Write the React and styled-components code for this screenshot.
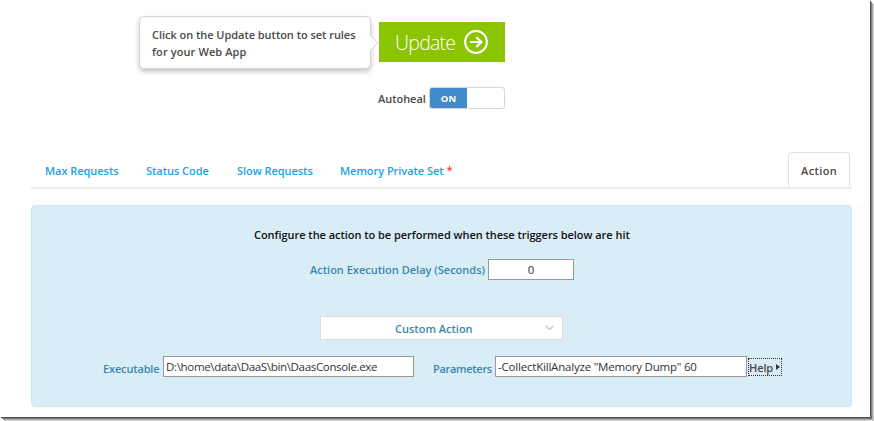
import React from "react";
import styled, { createGlobalStyle } from "styled-components";

const GlobalStyle = createGlobalStyle`
  * { box-sizing: border-box; }
  body { margin: 0; background: #fff; font-family: "Open Sans", "Noto Sans", sans-serif; font-size: 11px; overflow: hidden; }
`;

const Frame = styled.div`
  width: 874px;
  height: 421px;
  padding: 0 4px 4px 0;
  overflow: hidden;
`;

const Sheet = styled.main`
  height: 417px;
  padding: 16px 18px 0 31px;
  background: #fff;
  box-shadow: 1px 1px 0 #505050, 2px 2px 0 #7b7b7b, 3px 3px 0 #acacac, 4px 4px 0 #d2d2d2;
`;

const Text = styled.span`
  display: block;
  white-space: nowrap;
  font-weight: 600;
  line-height: 17px;
  color: ${(p) => p.$color || "#4a4a4a"};
  letter-spacing: ${(p) => p.$track ?? -0.04}px;
`;

const UpdateRow = styled.header`
  display: flex;
  height: 53px;
  padding-left: 108px;
`;

const Callout = styled.div`
  position: relative;
  width: 232px;
  height: 53px;
  padding: 9px 12px;
  border: 1px solid #d4d4d4;
  border-radius: 5px;
  background: #fff;
  box-shadow: 0 3px 5px rgba(0, 0, 0, 0.22);
`;

const Pointer = styled.svg`
  position: absolute;
  top: 17px;
  right: -9px;
`;

const UpdateButton = styled.button`
  display: flex;
  align-items: center;
  width: 126px;
  height: 40px;
  margin: 6px 0 0 8px;
  padding: 0 17px 0 16px;
  border: 0;
  background: #8bc400;
  color: #fff;
  font: 300 19.5px "Open Sans", sans-serif;
  letter-spacing: -0.75px;
  svg { flex: none; margin: -1px 0 0 auto; }
`;

const ToggleRow = styled.div`
  display: flex;
  align-items: center;
  gap: 3px;
  height: 22px;
  margin: 18px 0 0 347px;
`;

const ToggleLabel = styled.div`
  width: 48px;
`;

const Toggle = styled.div`
  width: 76px;
  height: 22px;
  border: 1px solid #d6d6d6;
  border-radius: 3px;
  overflow: hidden;
`;

const ToggleOn = styled.div`
  display: grid;
  place-items: center;
  width: 37px;
  height: 20px;
  background: #428bca;
  color: #fff;
  font-size: 9.5px;
  font-weight: 700;
`;

const Tabs = styled.nav`
  display: flex;
  height: 37px;
  margin-top: 43px;
  border-bottom: 2px solid #ededed;
`;

const Tab = styled.a`
  display: flex;
  width: ${(p) => p.$width}px;
  height: 35px;
  padding: 10px 0 0 14px;
`;

const ActiveTab = styled.a`
  height: 35px;
  width: 62px;
  margin: 0 2px 0 auto;
  padding: 9px 0 0 12px;
  border: 1px solid #e0e0e0;
  border-bottom: 0;
  border-radius: 4px 4px 0 0;
  background: #fff;
`;

const Star = styled.span`
  margin-left: 3px;
  color: #f33;
  font-weight: 600;
`;

const Panel = styled.section`
  height: 202px;
  margin-top: 16px;
  padding-top: 20px;
  border: 1px solid #c4eaf1;
  border-radius: 4px;
  background: #d9edf7;
`;

const Heading = styled.div`
  padding-left: 222px;
`;

const DelayRow = styled.div`
  display: flex;
  align-items: center;
  height: 21px;
  margin: 16px 0 0 278px;
`;

const DelayLabel = styled.div`
  width: 178px;
`;

const Field = styled.div`
  flex: none;
  width: ${(p) => p.$width}px;
  height: 21px;
  padding: 0 2px;
  border: 1px solid #999;
  background: #fff;
  color: #333;
  font-size: 11.5px;
  line-height: 20px;
  white-space: nowrap;
  text-align: ${(p) => (p.$center ? "center" : "left")};
  letter-spacing: ${(p) => p.$track || 0}px;
`;

const Select = styled.div`
  display: flex;
  align-items: center;
  justify-content: space-between;
  width: 243px;
  height: 24px;
  margin: 36px 0 0 288px;
  padding: 0 8px 0 74px;
  border: 1px solid #ddd;
  background: #fff;
`;

const ActionRow = styled.div`
  display: flex;
  margin: 16px 0 0 71px;
`;

const FieldLabel = styled.div`
  flex: none;
  width: ${(p) => p.$width}px;
  margin-left: ${(p) => p.$gap || 0}px;
  padding-top: 4px;
`;

const Help = styled.button`
  display: flex;
  align-items: center;
  justify-content: space-between;
  width: 34px;
  height: 18px;
  margin: 2px 0 0 1px;
  padding: 0 1px 0 0;
  border: 1px dotted #333;
  background: transparent;
  font: 11px "Open Sans", sans-serif;
`;

const blue = "#3a87ad";
const link = "#1ba1e8";

export default function App() {
  return (
    <Frame>
      <GlobalStyle />
      <Sheet>
        <UpdateRow>
          <Callout>
            <Text>Click on the Update button to set rules</Text>
            <Text $track={0.1}>for your Web App</Text>
            <Pointer width="9" height="18" viewBox="0 0 9 18">
              <path d="M0 1 8 9 0 17" fill="#fff" stroke="#d0d0d0" />
            </Pointer>
          </Callout>
          <UpdateButton>
            Update
            <svg width="24" height="24" viewBox="0 0 24 24" fill="none" stroke="#fff">
              <circle cx="12" cy="12" r="10.9" strokeWidth="2" />
              <path d="M6.2 12H17M12.3 7l5 5-5 5" strokeWidth="2.2" />
            </svg>
          </UpdateButton>
        </UpdateRow>
        <ToggleRow>
          <ToggleLabel><Text>Autoheal</Text></ToggleLabel>
          <Toggle><ToggleOn>ON</ToggleOn></Toggle>
        </ToggleRow>
        <Tabs>
          <Tab $width={101}><Text $color={link}>Max Requests</Text></Tab>
          <Tab $width={91}><Text $color={link}>Status Code</Text></Tab>
          <Tab $width={103}><Text $color={link}>Slow Requests</Text></Tab>
          <Tab $width={130}><Text $color={link}>Memory Private Set</Text><Star>*</Star></Tab>
          <ActiveTab><Text $track={0.4}>Action</Text></ActiveTab>
        </Tabs>
        <Panel>
          <Heading><Text $color="#111">Configure the action to be performed when these triggers below are hit</Text></Heading>
          <DelayRow>
            <DelayLabel><Text $color={blue} $track={0}>Action Execution Delay (Seconds)</Text></DelayLabel>
            <Field $width={86} $center>0</Field>
          </DelayRow>
          <Select>
            <Text $color={blue} $track={0}>Custom Action</Text>
            <svg width="9" height="6" viewBox="0 0 9 6" fill="none" stroke="#ccc" strokeWidth="1.4">
              <path d="M.7.7 4.5 4.5 8.3.7" />
            </svg>
          </Select>
          <ActionRow>
            <FieldLabel $width={60}><Text $color={blue} $track={-0.15}>Executable</Text></FieldLabel>
            <Field $width={251} $track={-0.33}>D:\home\data\DaaS\bin\DaasConsole.exe</Field>
            <FieldLabel $width={62} $gap={19}><Text $color={blue} $track={-0.3}>Parameters</Text></FieldLabel>
            <Field $width={252} $track={-0.2}>-CollectKillAnalyze "Memory Dump" 60</Field>
            <Help>
              <Text $track={-0.1}>Help</Text>
              <svg width="4" height="6" viewBox="0 0 4 6"><path d="M0 0 4 3 0 6Z" fill="#333" /></svg>
            </Help>
          </ActionRow>
        </Panel>
      </Sheet>
    </Frame>
  );
}
